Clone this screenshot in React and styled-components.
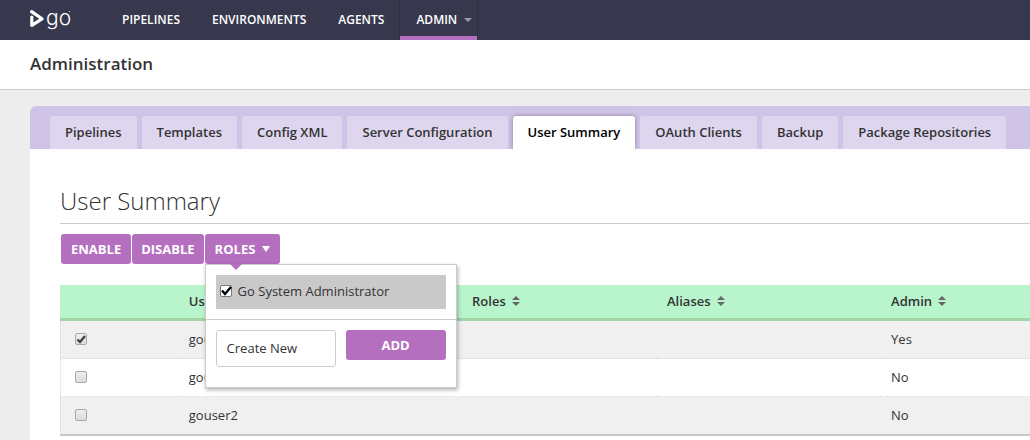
import React, { useState } from "react";
import styled, { createGlobalStyle, css } from "styled-components";

const colors = {
  navy: "#37384d",
  purple: "#b46fbf",
  lilac: "#cfc3e7",
  lilacLight: "#ded6ee",
  green: "#b8f5cc",
  greenDark: "#a4d3a6",
  line: "#cccccc",
  dots: "#d6d6d6",
  text: "#333333",
};

const GlobalStyle = createGlobalStyle`
  *, *::before, *::after { box-sizing: border-box; }
  body {
    margin: 0;
    background: #ededed;
    color: ${colors.text};
    font: 13px/20px "Open Sans", sans-serif;
  }
`;

const Page = styled.div`
  display: flex;
  flex-direction: column;
  min-height: 100vh;
  overflow-x: hidden;
`;

const Header = styled.header`
  display: flex;
  height: 40px;
  padding-left: 30px;
  background: ${colors.navy};
`;

const LogoLink = styled.a`
  display: flex;
  width: 76px;
  color: #fff;
`;

const Nav = styled.nav`
  display: flex;
`;

const NavLink = styled.a`
  display: flex;
  align-items: center;
  gap: 7px;
  padding: 4px 16px 0;
  border-bottom: 4px solid transparent;
  color: #fff;
  font-size: 12px;
  font-weight: 600;
  line-height: 16px;
  text-decoration: none;
  text-transform: uppercase;
  ${(p) =>
    p.$active &&
    css`
      padding-right: 5px;
      border-bottom-color: ${colors.purple};
      box-shadow: -1px 0 #303143, 1px 0 #303143;
    `}
`;

const TitleBar = styled.div`
  height: 50px;
  padding: 12px 30px;
  background: #fff;
  border-bottom: 1px solid ${colors.line};
`;

const PageTitle = styled.h1`
  margin: 0;
  font-size: 17px;
  font-weight: 600;
  line-height: 24px;
`;

const Panel = styled.main`
  flex: 1;
  margin: 16px 0 0 30px;
  border-top-left-radius: 6px;
  background: #fff;
  overflow: hidden;
`;

const Tabs = styled.nav`
  display: flex;
  gap: 5px;
  padding: 10px 20px 0;
  background: ${colors.lilac};
`;

const Tab = styled.a`
  padding: 6px 15px 7px;
  border-radius: 3px 3px 0 0;
  background: ${(p) => (p.$active ? "#fff" : colors.lilacLight)};
  box-shadow: ${(p) => (p.$active ? "0 0 4px rgba(0, 0, 0, 0.35)" : "none")};
  color: ${(p) => (p.$active ? "#000" : colors.text)};
  font-weight: 600;
  white-space: nowrap;
  text-decoration: none;
`;

const Content = styled.section`
  position: relative;
  padding: 34px 0 0 30px;
  background: #fff;
`;

const Heading = styled.h2`
  margin: 0;
  padding-bottom: 4px;
  border-bottom: 1px solid ${colors.line};
  font-size: 24px;
  font-weight: 300;
  line-height: 36px;
`;

const Toolbar = styled.div`
  display: flex;
  gap: 1px;
  padding: 10px 1px 21px;
`;

const Button = styled.button`
  display: flex;
  align-items: center;
  justify-content: center;
  gap: 7px;
  height: 30px;
  padding: 0 9px;
  border: 0;
  border-radius: 3px;
  background: ${colors.purple};
  color: #fff;
  font: 700 13px/20px "Open Sans", sans-serif;
  text-transform: uppercase;
  ${(p) => p.$wide && "width: 100px;"}
  ${(p) => p.$menu && "padding: 0 10px;"}
`;

const MenuAnchor = styled.div`
  position: relative;
`;

const Menu = styled.form`
  position: absolute;
  z-index: 1;
  top: 100%;
  left: 0;
  width: 252px;
  border: 1px solid ${colors.line};
  background: #fff;
  box-shadow: 1px 2px 4px rgba(0, 0, 0, 0.3);

  &::before {
    content: "";
    position: absolute;
    top: -1px;
    left: 24px;
    border: 6px solid transparent;
    border-top-color: ${colors.purple};
    border-bottom: 0;
  }
`;

const RoleList = styled.div`
  padding: 10px;
  border-bottom: 1px solid ${colors.line};
`;

const RoleItem = styled.label`
  display: flex;
  align-items: center;
  gap: 6px;
  height: 34px;
  padding: 0 4px 2px;
  background: #c9c9c9;
`;

const CreateRow = styled.div`
  display: flex;
  align-items: flex-start;
  gap: 10px;
  padding: 10px 10px 20px;
`;

const TextInput = styled.input`
  width: 120px;
  height: 37px;
  padding: 0 10px 2px;
  border: 1px solid ${colors.line};
  border-radius: 3px;
  background: #fff;
  color: ${colors.text};
  font: 13px/20px "Open Sans", sans-serif;
`;

const CheckBoxFrame = styled.span`
  display: grid;
  width: 12px;
  height: 12px;

  > * {
    grid-area: 1 / 1;
  }

  svg {
    pointer-events: none;
  }
`;

const CheckInput = styled.input`
  appearance: none;
  width: 12px;
  height: 12px;
  margin: 0;
  border: 1px solid ${(p) => (p.$plain ? "#777" : "#a8a8a8")};
  border-radius: 2px;
  background: ${(p) => (p.$plain ? "#fff" : "linear-gradient(#eee, #dcdcdc)")};
`;

const Table = styled.table`
  width: 100%;
  table-layout: fixed;
  border-collapse: separate;
  border-spacing: 0;
  border-bottom: 2px solid #c8c8c8;
`;

const Column = styled.col`
  width: ${(p) => p.$share};
`;

const HeadCell = styled.th`
  height: 36px;
  padding: 0 10px 2px;
  border-bottom: 3px solid ${colors.greenDark};
  background: ${colors.green};
  font-weight: 600;
  text-align: left;
`;

const SortButton = styled.button`
  display: flex;
  align-items: center;
  gap: 6px;
  padding: 0;
  border: 0;
  background: none;
  color: inherit;
  font: inherit;
`;

const Row = styled.tr`
  background: #fff;

  &:nth-child(odd) {
    background: #f0f0f0;
  }
`;

const Cell = styled.td`
  height: 38px;
  padding: 0 10px 2px;
  border-bottom: 1px dotted ${colors.dots};

  &:first-child {
    padding-left: 14px;
    border-left: 1px dotted ${colors.dots};
  }

  ${Row}:last-child & {
    height: 37px;
    border-bottom: 0;
  }
`;

function Logo() {
  return (
    <svg width="42" height="40" viewBox="0 0 42 40" role="img" aria-label="go">
      <path
        d="M1.6 11.6L12 18.8L1.8 25.4V17"
        fill="none"
        stroke="#fff"
        strokeWidth="3.2"
        strokeLinejoin="round"
        strokeLinecap="round"
      />
      <text x="16" y="25" fill="#fff" fontFamily="Inter, sans-serif" fontSize="21" fontWeight="300">
        go
      </text>
      <circle cx="39.5" cy="11.5" r="0.6" fill="#fff" />
    </svg>
  );
}

function DownArrow({ color, width, height }) {
  return (
    <svg width={width} height={height} viewBox="0 0 8 6" preserveAspectRatio="none" aria-hidden="true">
      <path d="M0 0h8L4 6z" fill={color} />
    </svg>
  );
}

function SortIcon() {
  return (
    <svg width="8" height="10" viewBox="0 0 8 10" aria-hidden="true">
      <path d="M0 4L4 0l4 4zM0 6h8L4 10z" fill="#666" />
    </svg>
  );
}

function CheckBox({ label, id, plain, initial }) {
  const [checked, setChecked] = useState(Boolean(initial));
  return (
    <CheckBoxFrame>
      <CheckInput
        type="checkbox"
        id={id}
        aria-label={label}
        $plain={plain}
        checked={checked}
        onChange={(e) => setChecked(e.target.checked)}
      />
      {checked && (
        <svg width="12" height="12" viewBox="0 0 12 12" aria-hidden="true">
          <path
            d={plain ? "M2 5.5l3 3.5L11 2" : "M2.5 6.5l2.5 2.5L10 3"}
            fill="none"
            stroke={plain ? "#000" : "#444"}
            strokeWidth="2.4"
          />
        </svg>
      )}
    </CheckBoxFrame>
  );
}

const tabs = [
  "Pipelines",
  "Templates",
  "Config XML",
  "Server Configuration",
  "User Summary",
  "OAuth Clients",
  "Backup",
  "Package Repositories",
];

const users = [
  { name: "gouser", admin: "Yes", selected: true },
  { name: "gouser1", admin: "No" },
  { name: "gouser2", admin: "No" },
];

export default function App() {
  return (
    <Page>
      <GlobalStyle />
      <Header>
        <LogoLink href="#home">
          <Logo />
        </LogoLink>
        <Nav>
          <NavLink href="#pipelines">Pipelines</NavLink>
          <NavLink href="#environments">Environments</NavLink>
          <NavLink href="#agents">Agents</NavLink>
          <NavLink href="#admin" $active>
            Admin
            <DownArrow color="#999aa6" width={8} height={4} />
          </NavLink>
        </Nav>
      </Header>
      <TitleBar>
        <PageTitle>Administration</PageTitle>
      </TitleBar>
      <Panel>
        <Tabs>
          {tabs.map((name) => (
            <Tab key={name} href="#tab" $active={name === "User Summary"}>
              {name}
            </Tab>
          ))}
        </Tabs>
        <Content>
          <Heading>User Summary</Heading>
          <Toolbar>
            <Button type="button" $menu>Enable</Button>
            <Button type="button">Disable</Button>
            <MenuAnchor>
              <Button type="button" aria-expanded="true" $menu>
                Roles
                <DownArrow color="#fff" width={8} height={6} />
              </Button>
              <Menu onSubmit={(e) => e.preventDefault()}>
                <RoleList>
                  <RoleItem htmlFor="role-admin">
                    <CheckBox id="role-admin" plain initial />
                    Go System Administrator
                  </RoleItem>
                </RoleList>
                <CreateRow>
                  <TextInput type="text" aria-label="New role" defaultValue="Create New" />
                  <Button type="submit" $wide>
                    Add
                  </Button>
                </CreateRow>
              </Menu>
            </MenuAnchor>
          </Toolbar>
          <Table>
            <colgroup>
              <Column $share="12.25%" />
              <Column $share="29.2%" />
              <Column $share="20.1%" />
              <Column $share="23.1%" />
              <Column $share="auto" />
            </colgroup>
            <thead>
              <tr>
                <HeadCell />
                {["User", "Roles", "Aliases", "Admin"].map((name) => (
                  <HeadCell key={name} scope="col">
                    <SortButton type="button">
                      {name}
                      <SortIcon />
                    </SortButton>
                  </HeadCell>
                ))}
              </tr>
            </thead>
            <tbody>
              {users.map((user) => (
                <Row key={user.name}>
                  <Cell>
                    <CheckBox label={`Select ${user.name}`} initial={user.selected} />
                  </Cell>
                  <Cell>{user.name}</Cell>
                  <Cell />
                  <Cell />
                  <Cell>{user.admin}</Cell>
                </Row>
              ))}
            </tbody>
          </Table>
        </Content>
      </Panel>
    </Page>
  );
}
